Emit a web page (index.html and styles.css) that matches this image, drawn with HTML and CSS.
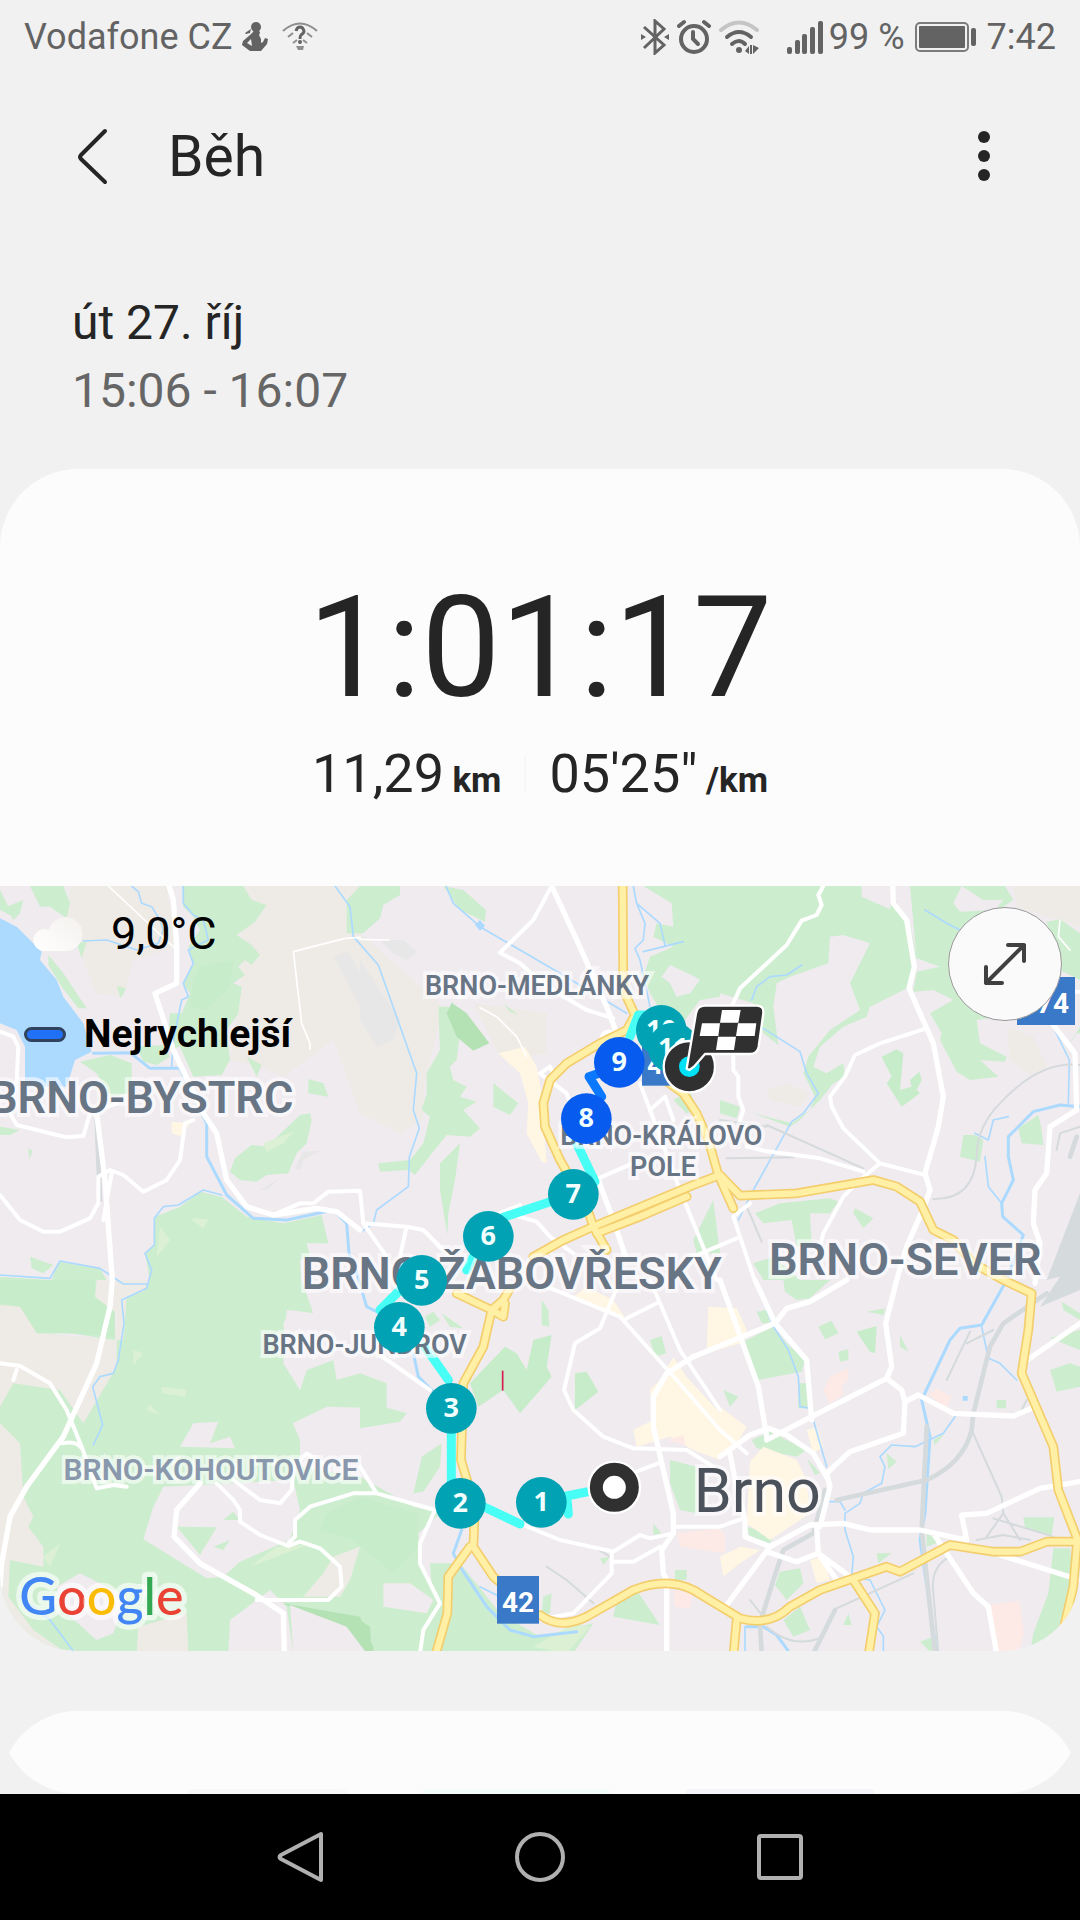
FILE: index.html
```html
<!DOCTYPE html>
<html lang="cs">
<head>
<meta charset="utf-8">
<meta name="viewport" content="width=device-width, initial-scale=1">
<title>Běh</title>
<link rel="stylesheet" href="styles.css">
</head>
<body>
<div class="status">
  <span>Vodafone CZ</span>
  <svg class="status-person" width="26" height="30" viewBox="0 0 26 30" fill="#636363"><circle cx="14" cy="5" r="5"/><path d="M12 8h5l1 3-1 2 2 4v4l2-1 2-4 3 1-1 5-6 7H8l-8-6 1-4 7-6 3-3z"/><path d="M3 11l6-4-1 4-4 1z"/><path d="M9 17l-4 4 5 3z" fill="#f1f1f1"/></svg>
  <svg class="status-ask" width="36" height="30" viewBox="0 0 36 30" fill="none" stroke="#8e8e8e" stroke-width="2"><path d="M1 9q17-15 34 0" stroke-width="2"/><path d="M6 15l5-4M30 15l-5-4M11 21l4-3M25 21l-4-3"/><path d="M14 9q1-4 4-4t4 4q0 2-3 4-1 1-1 4" stroke="#636363" stroke-width="3"/><circle cx="18" cy="20" r="1" stroke="#636363"/><path d="M14 24h8l-1 4h-5z" fill="#8e8e8e" stroke="none"/></svg>
  <span class="spacer"></span>
  <svg width="28" height="36" viewBox="0 0 28 36" fill="none" stroke="#636363" stroke-width="3"><path d="M3 8l20 18-9 8V2l9 8L3 29"/><path d="M0 15l5 3-5 3zM28 15l-5 3 5 3z" fill="#636363" stroke="none"/></svg>
  <svg class="status-alarm" width="34" height="36" viewBox="0 0 34 36" fill="none" stroke="#636363" stroke-linecap="round"><circle cx="17" cy="20" r="13" stroke-width="4"/><path d="M16 13v7l5 5" stroke-width="4"/><path d="M2 7l5-4M32 7l-5-4" stroke-width="4"/></svg>
  <svg class="status-wifi" width="40" height="36" viewBox="0 0 40 36" fill="none" stroke="#636363" stroke-width="4" stroke-linecap="round"><path d="M2 11q18-15 36 0" stroke="#c5c5c5"/><path d="M8 18q12-10 24 0M13 25q7-6 13 0"/><circle cx="20" cy="31" r="3" fill="#636363" stroke="none"/><path d="M26 32l4-5v8zM31 26h2v9h-2zM34 26v9l6-6z" fill="#636363" stroke="none"/></svg>
  <svg class="status-signal" width="36" height="36" viewBox="0 0 36 36" fill="#636363"><rect y="28" width="5" height="7" rx="2"/><rect x="8" y="21" width="5" height="14" rx="2"/><rect x="15" y="15" width="5" height="20" rx="2"/><rect x="23" y="8" width="5" height="27" rx="2"/><rect x="31" y="2" width="5" height="33" rx="2"/></svg>
  <span class="status-percent">99 %</span>
  <svg class="status-battery" width="62" height="30" viewBox="0 0 62 30"><rect x="1" y="1" width="52" height="28" rx="4" fill="none" stroke="#7b7b7b" stroke-width="2"/><rect x="4" y="4" width="46" height="22" rx="1" fill="#636363"/><rect x="56" y="6" width="5" height="18" rx="2" fill="#636363"/></svg>
  <span>7:42</span>
</div>
<header class="bar">
  <button class="icon-button" aria-label="Zpět"><svg width="34" height="60" viewBox="0 0 34 60" fill="none" stroke="#252525" stroke-width="4" stroke-linecap="round" stroke-linejoin="round"><path d="M29 5L5 29q-2 2 0 4l24 23"/></svg></button>
  <h1>Běh</h1>
  <button class="icon-button more" aria-label="Další možnosti"><svg width="12" height="50" viewBox="0 0 12 50" fill="#252525"><circle cx="6" cy="6" r="6"/><circle cx="6" cy="25" r="6"/><circle cx="6" cy="44" r="6"/></svg></button>
</header>
<main>
  <section class="when">
    <p class="day">út 27. říj</p>
    <p class="hours">15:06 - 16:07</p>
  </section>
  <section class="card">
    <div class="summary">
      <p class="duration">1:01:17</p>
      <div class="metrics">
        <p>11,29 <b>km</b></p>
        <span class="rule"></span>
        <p>05'25" <b>/km</b></p>
      </div>
    </div>
    <div class="map">
      <svg class="map-canvas" viewBox="0 18 3240 2295" preserveAspectRatio="xMidYMid slice" role="img" aria-label="Mapa trasy">
        <defs>
          <g id="highways">
            <path d="M1868 10L1870 330 1905 405 1880 450 1800 490 1700 550 1650 600 1630 670 1635 740 1680 840 1760 980 1780 1040 1820 1110"/>
            <path d="M1600 1130L1690 1080 1780 1040 2080 915 2160 885 2220 947 2390 940 2620 900 2690 920 2760 965 2800 1050 2860 1080 2920 1150 3010 1200 3095 1240 3085 1350 3065 1480 3160 1700 3175 1830 3235 1985"/>
            <path d="M1980 590L2050 640 2090 700 2125 780 2155 885 2200 985"/>
            <path d="M1790 1060L1920 1010 2060 950"/>
            <path d="M1370 1240L1475 1290 1450 1400 1390 1510 1383 1740 1425 1880 1420 2000 1480 2090 1540 2140"/>
            <path d="M1530 1225L1510 1260 1475 1290 1510 1310 1515 1270"/>
            <path d="M1410 2000L1345 2090 1342 2200 1305 2330"/>
            <path d="M1620 2205Q1680 2250 1760 2210L1900 2130Q2000 2090 2080 2130L2220 2215Q2310 2240 2370 2180L2460 2130 2560 2095 2660 2060 2700 2075 2850 1995 2980 2015 3060 2015 3140 1985 3240 1985"/>
            <path d="M2210 2220L2200 2330M2560 2100L2625 2200 2605 2330M3230 2000L3220 2120 3190 2250"/>
          </g>
        </defs>
        <rect class="land" width="3240" height="2320"/>

        <g class="field">
          <path d="M210 18H500L530 200 400 240 370 350 290 340 260 270 200 100ZM730 18H1080V160L1330 380 1270 620 1270 720 1200 760 1080 700 1000 480 850 590 790 560 690 540 720 320Z"/>
          <path d="M1420 370L1640 400V520L1580 530 1495 520ZM3040 18H3240V140L3050 80ZM3020 440L3100 470 3140 560 3090 585 3030 540ZM2300 630L2360 610 2430 640 2400 680 2310 660Z"/>
        </g>
        <g class="wood">
          <path d="M545 18H730L755 60 800 75 765 125 710 165 755 195 780 225 755 255 735 240 715 260 735 285 700 310 725 320 715 400 680 450 690 540 665 585 580 590 540 500 500 510 510 400 545 400 570 340 550 310 580 250 565 200 600 150 580 110 550 80Z"/>
          <path d="M0 30L40 110 0 90ZM90 18H190L210 70 200 115 150 80 120 80ZM20 80L70 60 60 100 40 120ZM145 225L190 280 260 385 235 385 185 320 145 255ZM350 318L378 325 362 355ZM240 545L330 525 395 550V640L330 650 290 580ZM410 500L490 495 510 530 470 555 430 545ZM740 530L785 555 770 590ZM925 597L970 610 985 650 925 640ZM0 740L60 750 30 765 0 765ZM85 805L97 812 88 840ZM230 190L260 185 245 235Z"/>
          <path d="M755 795L800 800 900 705 930 700 935 720 920 790 890 820 865 880 800 885 770 905 720 900 690 875 705 835Z"/>
          <path d="M465 1010L540 980 600 935 665 950 740 1010 850 1030 965 1005 985 1090 920 1090 930 1130 900 1140 905 1200 940 1300 870 1290 850 1330 860 1450 900 1530 920 1470 1000 1440 1010 1500 1080 1480 1160 1510V1585L980 1580 975 1630 880 1630 900 1680V1760L1080 1790 1240 1880 1320 1900 1255 1960 1260 2050 1320 2160V2320H0V1270L60 1280 110 1360 350 1380 380 1250 450 1200 435 1120 465 1095Z"/>
          <path d="M155 1200L175 1145 300 1165 320 1200 345 1300V1380L210 1360 110 1360 60 1280 0 1270V1190ZM90 1130L160 1155 130 1180 95 1165Z"/>
          <path d="M1080 18H1200V45L1150 75 1140 115 1090 160H1040V60ZM1330 18L1390 30 1458 90 1455 125 1380 90ZM1930 18L2015 70 2020 140 1970 130 1960 170 2020 200 1950 230 1930 290 1950 340 2000 420 2040 440 2100 360 2160 350V18Z"/>
          <path d="M1315 380H1345L1380 460 1370 540 1350 560 1360 600 1400 620 1380 650 1430 665 1390 690 1440 745 1410 770 1340 765 1280 840 1245 885 1225 870 1140 875 1135 850 1230 840 1270 790 1290 710 1265 690 1280 640V580L1320 510ZM1380 790L1365 900 1345 1000 1342 1065 1320 930V850ZM1480 610L1555 670 1530 705 1480 680ZM1510 370L1555 405 1530 395ZM2080 1080L2140 960 2160 1120 2090 1120ZM2020 660L2070 630 2090 690 2060 700Z"/>
          <path d="M2160 18H2680L2690 70 2730 130 2750 230 2730 320 2610 380 2600 410 2530 440 2460 500 2440 560 2480 580 2530 550 2535 590 2500 610 2460 660 2400 720 2370 740 2260 700 2375 730 2430 690 2445 650 2410 580 2425 530 2490 450 2580 390 2550 310 2570 270 2610 190 2530 165 2490 170 2485 250 2370 290 2330 310 2320 380 2335 495 2290 460 2260 370 2160 340Z"/>
          <path d="M2730 18H3015L3040 60 2950 120 2850 240 2920 380 3000 410 2930 420 2940 490 3020 530 3015 545 2940 540 2995 590 2910 600 2870 575 2820 480 2825 460 2790 400 2860 360 2800 330 2740 335 2750 275 2820 260 2750 235Z"/>
          <path d="M3140 125L3180 118 3240 160V300L3180 270ZM3055 745L3115 705 3125 750 3130 795 3065 790ZM2890 765H2925L2950 780 2940 845 2880 830ZM2265 1000L2340 970 2490 955 2515 965 2490 1000H2430L2435 1090 2390 1100 2375 1020 2290 1030ZM2565 985L2620 1015 2590 1045 2560 1000ZM2160 660L2220 680 2210 715 2160 700ZM2260 1150L2320 1130 2400 1200 2290 1200ZM3185 530L3230 460H3240V440Z"/>
          <path d="M1290 2050H1380L1500 2200 1620 2270 1780 2230 1720 2320H1310ZM1625 1260L1645 1290 1648 1340 1625 1335ZM1950 1380L1985 1368 1998 1420 1965 1430ZM1080 1560L1150 1580 1220 1600 1200 1625 1080 1645ZM1265 1730L1325 1690 1320 1760 1270 1835 1240 1840 1250 1800ZM2010 1740L2090 1760V1900L2040 1890 2010 1810ZM1850 2160L1910 2130 1980 2235 1840 2210ZM1275 1310L1300 1295 1320 1320 1290 1340ZM1325 1300L1390 1345 1350 1340ZM1630 2150L1655 2140 1650 2200 1625 2205ZM1800 2035L1830 2030 1810 2055ZM1960 1930L1985 1960 1960 1965ZM2025 2070H2060V2100H2025Z"/>
          <path d="M2230 1385L2320 1340 2360 1390 2415 1440 2405 1475 2275 1500ZM2270 1295L2300 1290 2310 1330 2285 1330ZM2350 1200H2490L2430 1255 2390 1260 2355 1235ZM2455 1340L2495 1322 2515 1360 2475 1378ZM2515 1415L2545 1408V1440L2520 1445ZM2600 1295L2655 1285 2650 1305ZM2700 1365L2725 1415 2700 1400ZM3150 1470L3210 1450 3240 1460V1520L3170 1535ZM3185 1265L3240 1300V1320L3190 1290ZM3150 1375L3240 1350V1410ZM3070 1912H3163L3155 1965 3075 1945ZM2325 2115L2340 2075 2400 2065 2410 2110 2360 2160ZM2350 2220L2400 2180 2430 2250 2380 2270ZM3160 2005H3210L3220 2100 3170 2260 3090 2320 3100 2260 3145 2140Z"/>
          <path d="M2255 1680L2310 1655 2420 1710 2390 1730 2270 1705ZM2170 1530L2215 1550 2190 1580ZM2800 1680L2835 1660 2805 1695ZM2660 1720L2690 1745 2665 1768ZM2630 2020H2675L2635 2050ZM2990 1560H3018V1585H2990ZM2395 1510H2423V1585H2395ZM2420 1735L2460 1780 2445 1785ZM2530 2235L2555 2235 2545 2200ZM2760 2285L2800 2270 2795 2320ZM2240 1940L2320 1965 2310 1990 2250 1970ZM2780 1960L2820 1985 2780 2000Z"/>
        </g>
        <g class="wood-dark">
          <path d="M1355 368L1400 400 1468 490 1420 512 1370 470 1340 400ZM850 2170L1080 2210 1120 2300V2320L1000 2250ZM1080 2220L1110 2240 1115 2320H1080Z"/>
        </g>
        <g class="wood-mid">
          <path d="M1515 1400L1550 1420 1580 1470 1600 1380 1655 1365 1640 1460 1655 1490 1560 1600 1510 1530 1435 1580 1410 1510ZM1725 1480L1760 1475 1795 1535 1725 1590ZM2570 1355L2630 1338 2625 1420 2610 1415ZM2645 530L2690 508 2710 520 2700 630 2735 620 2730 600 2758 575 2765 600 2750 630 2760 640 2705 680 2660 610 2675 590ZM0 1200H285V1250L345 1300V1370L210 1360 110 1360 60 1280 0 1270ZM980 1900L1080 1850 1250 1900 1255 2000 1180 2080 1060 1980 960 1950ZM600 260L700 240 690 320 620 390 570 380 580 300Z"/>
        </g>
        <g class="meadow">
          <path d="M790 790L880 755 850 790 800 815ZM480 1040L510 1080 470 1130ZM570 1015L625 1018 610 1045ZM400 1410L430 1420 400 1455ZM485 1520L560 1530 555 1550 485 1540ZM450 1575L480 1605 440 1590ZM130 2030L180 1990 150 2060ZM830 2000L920 1995 750 2060ZM1600 2300L1720 2230 1770 2240 1700 2320Z"/>
        </g>
        <g class="field">
          <path d="M0 1275L60 1280 110 1360 350 1380 350 1460 250 1630 180 1530 40 1510 0 1580ZM290 1200H450L430 1235 380 1250 370 1380H345L350 1300 285 1250ZM0 1630L60 1690 70 1850 100 1910 85 1940 130 2000V2060L30 2040 25 2150 100 2250 200 2320H0ZM415 2240L560 2200 565 2320H410ZM1080 2000L1000 2030 970 2080 910 2150H1020L1050 2100Z"/>
        </g>
        <g class="land">
          <path d="M540 1700L580 1630 655 1625 630 1690 690 1670 705 1705ZM860 1290L940 1305 920 1200H1200V1440L1000 1440 920 1470 900 1530 850 1450ZM980 1580L1080 1620V1700L900 1675 878 1630ZM490 1820L880 1800 900 1890 870 1980 720 2045 670 2090 620 2095 430 1978 460 1880ZM690 2220L810 2130 860 2180 880 2320H685ZM170 2120L240 2080 380 2150 340 2260 290 2280 200 2200ZM870 2175L1040 2240 1100 2320H880ZM1150 2110H1230L1300 2160 1280 2200 1150 2180ZM1985 290L2010 255 2085 290 2100 300 2070 340 2030 350 2010 310ZM2585 18H2680L2670 88 2585 50ZM2860 70L2885 18 2950 60 3010 60 2985 90 2880 95Z"/>
        </g>
        <path class="wood" d="M530 1940L650 1942 600 2025ZM640 2000L690 1980 670 2010ZM670 1920L700 1895 720 1920Z"/>
        <g class="town">
          <path d="M1495 520L1575 500 1610 560 1625 640 1640 850 1625 845 1580 760 1585 670 1560 580ZM1720 1250L1880 1320 1840 1260 1760 1220ZM1950 1530L1980 1500 2020 1430 2060 1490 2160 1600V1740L2080 1710 2010 1670 1910 1700 1900 1650 1960 1620ZM2125 1280L2210 1285 2240 1350 2220 1390 2120 1420ZM2160 1580L2240 1640 2210 1690 2160 1720ZM2250 1745L2290 1700 2390 1740 2420 1800 2430 1900 2310 1980 2240 1930ZM2160 2030L2220 2000 2280 2010 2220 2050 2170 2090ZM2430 2040L2470 2030 2490 2100 2450 2110ZM2420 1650L2450 1640 2470 1700 2440 1720ZM515 725L570 730 540 768 515 760Z"/>
        </g>
        <path class="hospital" d="M2030 1960L2160 1945 2175 1965V2020L2040 2000ZM2020 2130L2080 2140 2070 2185 2025 2180ZM2000 1680L2050 1665 2055 1695ZM2470 1530L2490 1490 2545 1465V1500L2525 1520 2530 1545 2490 1570ZM2785 1545L2810 1525 2855 1550 2840 1585ZM2970 2175L3058 2162 3072 2260 3055 2320H2990Z"/>
        <path class="yard" d="M3240 940V1230L3120 1280 3180 1190 3140 1200Z"/>
        <path class="industry" d="M1000 228L1045 215 1080 280V380ZM1080 240L1200 420 1180 480 1130 500 1080 420ZM1140 180L1210 180 1250 215 1220 240 1180 220ZM885 865L910 815 960 812 910 840 900 870ZM780 930L840 895 800 930Z"/>

        <path class="water" d="M0 115L50 140 125 215 120 240 170 300 190 350 250 430 275 515 225 540 200 620H75V500L50 450 0 430ZM1425 135L1440 120 1455 138 1440 152ZM2888 1548H2903V1562H2888Z"/>
        <g class="stream">
          <path d="M395 18L415 35 425 70 455 80 480 120 490 150 475 190 410 210 320 180 250 183M550 18V70L580 105 610 120 625 180 565 210 580 250 550 310 565 350 545 360 520 480 515 560"/>
          <path d="M665 945L610 930 535 975 490 980 463 1015V1095L435 1120 455 1170 440 1225 365 1260 372 1330 355 1440 340 1480 300 1490 278 1520 308 1635 280 1695M1005 18L1050 80 1060 170 1135 255 1250 580 1240 690 1258 745 1228 830 1225 920 1130 990 1120 1030 1085 1055M0 1185L150 1195 180 1143 300 1165 370 1212 445 1212"/>
          <path d="M1338 18L1360 70 1440 140 1680 280 1880 400M1900 18L1910 70 1935 130 1930 180 1905 205 1920 240 1950 380M1910 70L1980 130 1995 195M1930 215L2050 185M2405 255L2360 285 2310 290 2270 320 2255 360M2290 445L2400 515 2420 580 2455 640 2410 700 2375 725 2260 930 2215 1020M2775 90L2840 130 2880 150"/>
          <path d="M3155 430L3208 540 3205 670M3025 710L2980 720 2965 780 2925 760M2955 830L2965 920 3005 970M60 2150L150 2220 180 2260 225 2320M2265 1200L2320 1340 2365 1410 2395 1490 2400 1580 2430 1585 2480 1760M2945 1340L2965 1435 3000 1450 3050 1500M1440 2120L1500 2150 1580 2210"/>
          <path d="M2865 1610L2830 1660 2745 1700 2675 1695 2640 1730 2655 1760 2645 1810 2590 1840 2580 1870 2535 1900V1950L2560 2030 2555 2090 2610 2100 2655 2190 2630 2240 2650 2268V2320M2490 1865L2520 1865 2535 1890M2235 2240V2320"/>
        </g>
        <g class="river">
          <path d="M280 520L390 518 450 565 540 565 620 730V830L680 945 760 1015 860 1020 1000 990 1040 1030 1047 1120 1070 1180 1100 1280 1140 1300M1240 1420L1255 1490 1295 1530M1385 1950L1360 2020 1380 2060 1460 2180 1530 2250 1600 2270 1730 2255M3240 680L3180 675 3100 695 3025 770V830L3040 900 3005 970 3008 1010 3070 1065 3020 1200 2945 1335 2880 1345 2850 1380 2765 1560 2790 1670 2775 1900 2760 1980 2810 2320M2240 2240H2290L2330 2265 2370 2320"/>
        </g>
        <g class="rail">
          <path d="M2300 735L2590 865M2180 835L2380 832M2160 720L2300 740M2800 957Q2920 960 2930 830 2930 740 3000 670 3120 540 3240 555M3170 810L3180 760 3240 740M2915 1650L3005 1850 3010 1900 2960 1970M3010 1900L3060 1980M2980 1915L3160 1970M2930 1980L3010 1965 3090 1980M2840 1500L2910 1355M2900 1390L2980 1350M2510 2185L2740 2080M2850 2030Q2790 2060 2800 2140L2815 2320M2250 2160L2290 2210M1640 2060L1700 2100 1780 2170M2240 980L2285 1085M1780 2000L1830 2030M2300 2240Q2380 2310 2470 2270M3080 1560L3060 1600"/>
        </g>
        <g class="rail-wide">
          <path d="M3140 1240L3010 1330 2970 1400 2920 1600 2915 1650Q2890 1750 2780 1800L2510 1860M2780 1640L2765 1950 2805 2320M2475 1830L2440 1960 2350 2010 2320 2100 2280 2230 2285 2320M2505 2190L2440 2320M3210 830L3230 770M290 720L300 960"/>
        </g>
        <g class="street">
          <path d="M0 455L40 470 55 500 50 600 30 700 50 735 200 772 250 768 270 700 350 670M0 945L60 1020 130 1055H180L270 1015 295 970V890L330 870 370 885 430 935 500 900 540 840 555 730 580 720M310 1020L335 880M830 1000L900 970 940 970 985 935 1080 932 1090 1030 1220 1040 1270 1050 1350 1130M1220 1040L1200 1130M1090 1030L1160 1130"/>
          <path d="M1655 18L1600 120 1500 218 1560 250 1640 320 1760 390 1840 415M1620 580L1700 640 1730 720M1920 610L1950 690 2040 930 2150 1200M1950 690L1995 650 2020 720M1795 895L1910 845M1520 1000L1610 1025 1650 1070 1720 1120M1620 580L1650 560 1660 580M1800 490Q1810 440 1840 460M1460 1015L1560 975"/>
          <path d="M2470 18L2455 45 2465 75 2450 105 2405 122 2360 195 2220 325 2195 380M2200 530V570L2215 590V650L2230 690 2220 720M2770 448L2640 490 2565 525 2535 590 2490 650 2495 680 2530 745 2640 850 2775 885M2640 850L2580 900 2530 950 2470 1060 2460 1100M2240 800L2290 812 2460 835 2590 875M3240 335H3210M2260 1190L2200 1010 2250 970M2080 1130L2210 1075"/>
          <path d="M0 1450L60 1458 150 1510 200 1590 245 1700 290 1825 340 1815 380 1820M185 1690Q230 1680 245 1705M50 1470L40 1500M770 2160H985L1025 2120 1020 2060 960 2005 900 1985 865 1998 780 1965 720 1925V1890L700 1860 650 1810M700 1800L780 1860 840 1870 875 1830 880 1760 920 1720 980 1760M865 1990L885 1970V1920L930 1880 1060 1840 1130 1840M1080 1760L1130 1840 1305 1890 1260 1990V2050L1320 2170 1270 2250 1260 2320M1140 1425L1290 1530"/>
          <path d="M1640 1220L1860 1310 2030 1500 2160 1650 2240 1720M1860 1200L1800 1345 1725 1390 1692 1530 1720 1590 1810 1670 1900 1705 2060 1710 2140 1760M1950 1200L2040 1410 2160 1590M2020 1960L1950 1975 1920 1965 1840 2015 1680 1980 1570 1935M1980 2000L1900 2045H1840M1835 2020V2080L1720 2200 1640 2215M1910 1775L1980 1748M2030 1940H2160L2230 1915M1880 1315L1970 1270"/>
        </g>
        <g class="road">
          <path d="M505 10L520 60 530 200V310L465 340 520 510 610 700 650 760 680 900 740 980 820 1005 950 985 1010 995 1080 1050M290 700L315 900 337 1200 330 1280 290 1450 190 1670 80 1820 30 1910 5 2050 0 2120M1655 18L1730 180 1820 380 1850 460M1795 900L1840 1020 1880 1140M600 1810L530 1890 522 1970 600 2050 760 2140 850 2200 853 2320"/>
          <path d="M2678 10L2680 70 2720 120 2743 260 2727 325 2800 490 2830 650 2815 740 2775 880 2790 930 2770 985 2720 1100 2690 1200 2657 1330 2675 1460 2660 1495 2435 1610 2300 1680M3160 435L3225 520 3230 690 3150 740 3140 880 3105 930 3100 1030 3120 1090 3105 1210"/>
          <path d="M2160 1200L2275 1520 2300 1670M2080 1430L2325 1330 2360 1285 2430 1265 2540 1200M2265 1200L2325 1330 2420 1440 2435 1620M2660 1495L2705 1530 2715 1565 2710 1660 2550 1715 2480 1780 2490 1820 2460 1940M2715 1565L2755 1545 2860 1600 3040 1608 3095 1585M2160 1730L2250 1665 2305 1645 2360 1665 2440 1720 2485 1800M2190 1720L2205 1800 2235 1920V1970L2310 2000 2430 1935 2530 1930 2610 1950H2760L2900 1980 2885 1905 2960 1900 3120 1825 3240 1805M2310 2000L2180 2175M2300 2015L2390 2045 2455 2020 2510 2100M2450 1940L2455 2020 2550 2090M2800 1960L2920 2140 2965 2180 2990 2320M3000 2025L3240 2100M3075 1445L3140 1400 3240 1330"/>
          <path d="M2080 1430L2000 1480 1960 1550V1640L2020 1900V1960L1985 2010 1990 2080 2000 2100V2320"/>
        </g>
        <path class="lane" d="M325 18L530 210M1168 180L1080 178V172L1035 175 880 215 905 430 930 490V508M1440 383L1490 410 1550 470 1580 530M3180 120L3175 170 3210 210"/>
        <use href="#highways" class="highway-edge"/>
        <use href="#highways" class="highway"/>

        <g class="route">
          <path d="M1765 1835L1700 1848 1705 1902M1440 1875L1560 1932M1354 1650V1810M1345 1500L1275 1400M1140 1290L1200 1230M1400 1170L1420 1130M1510 1012L1660 962M1785 905L1725 780M1890 470L1915 405 1950 405"/>
          <path class="fastest" d="M1805 650L1767 590 1810 575"/>
        </g>
        <path d="M1508 1472V1532" stroke="#d81b52" stroke-width="5"/>

        <g class="label">
          <text class="large" x="880" y="700" text-anchor="end">BRNO-BYSTRC</text>
          <text class="large" x="1535" y="1228" text-anchor="middle">BRNO-ŽABOVŘESKY</text>
          <text class="large" x="2716" y="1184" text-anchor="middle">BRNO-SEVER</text>
          <text x="1611" y="344" text-anchor="middle">BRNO-MEDLÁNKY</text>
          <text x="1984" y="794" text-anchor="middle">BRNO-KRÁLOVO</text>
          <text x="1989" y="889" text-anchor="middle">POLE</text>
          <text x="1094" y="1421" text-anchor="middle">BRNO-JUNDROV</text>
          <text class="pale" x="633" y="1799" text-anchor="middle">BRNO-KOHOUTOVICE</text>
          <text class="city" x="2272" y="1896" text-anchor="middle">Brno</text>
        </g>
        <g class="shield">
          <rect x="3051" y="291" width="174" height="144"/><text x="3207" y="398" text-anchor="end">374</text>
          <rect x="1926" y="474" width="126" height="143"/><text x="1989" y="582" text-anchor="middle">42</text>
          <rect x="1491" y="2088" width="126" height="143"/><text x="1554" y="2195" text-anchor="middle">42</text>
        </g>

        <g class="stop">
          <circle cx="1984" cy="451" r="76"/><text x="1984" y="478">10</text>
          <circle cx="2020" cy="504" r="76"/><text x="2020" y="531">11</text>
          <circle cx="1265" cy="1201" r="76"/><text x="1265" y="1228">5</text>
          <circle cx="1198" cy="1342" r="76"/><text x="1198" y="1368">4</text>
          <circle cx="1354" cy="1585" r="76"/><text x="1354" y="1611">3</text>
          <circle cx="1381" cy="1870" r="76"/><text x="1381" y="1896">2</text>
          <circle cx="1624" cy="1867" r="76"/><text x="1624" y="1893">1</text>
          <circle cx="1465" cy="1069" r="76"/><text x="1465" y="1095">6</text>
          <circle cx="1720" cy="943" r="76"/><text x="1720" y="969">7</text>
          <circle class="fastest" cx="1759" cy="716" r="76"/><text x="1759" y="742">8</text>
          <circle class="fastest" cx="1858" cy="547" r="76"/><text x="1858" y="573">9</text>
        </g>
        <g fill="#303030" stroke="#fff" stroke-width="7" stroke-linejoin="round">
          <circle cx="1843" cy="1822" r="77"/><circle cx="1843" cy="1822" r="31" fill="#fff"/>
          <circle cx="2068" cy="560" r="77"/><circle cx="2068" cy="560" r="31" fill="#00e1f5" stroke="none"/>
          <path d="M2068 570L2060 566 2088 400Q2091 377 2115 377H2270Q2292 377 2290 400L2276 500Q2272 522 2250 522H2115L2082 560Z"/>
          <path stroke="none" fill="#fff" d="M2166 390H2222L2215 428H2160ZM2106 430H2160L2155 468H2099ZM2214 430H2269L2264 468H2208ZM2154 470H2208L2202 510H2148Z"/>
        </g>
        <text class="brand" x="58" y="2205"><tspan fill="#4285f4">G</tspan><tspan fill="#ea4335">o</tspan><tspan fill="#fbbc05">o</tspan><tspan fill="#4285f4">g</tspan><tspan fill="#34a853">l</tspan><tspan fill="#ea4335">e</tspan></text>
      </svg>
      <div class="legend">
        <svg width="52" height="36" viewBox="0 0 52 36"><defs><linearGradient id="cloud" x1="0" y1="1" x2="1" y2="0"><stop offset="0" stop-color="#fff"/><stop offset="1" stop-color="#f4f1ee"/></linearGradient></defs><path d="M12 35a11 11 0 1 1 5-21 17 17 0 1 1 18 21z" fill="url(#cloud)"/></svg>
        <span class="temperature">9,0°C</span>
        <span class="pill"></span>
        <strong>Nejrychlejší</strong>
      </div>
      <button class="expand" aria-label="Zvětšit mapu"><svg width="44" height="44" viewBox="0 0 44 44" fill="none" stroke="#404040" stroke-width="4" stroke-linecap="round" stroke-linejoin="round"><path d="M3 41L41 3M25 3h16v16M3 25v16h16"/></svg></button>
    </div>
  </section>
  <section class="next"><div class="next-card"><i class="chip steel"></i><i class="chip mint"></i><i class="chip violet"></i></div></section>
</main>
<nav class="system">
  <button aria-label="Zpět"><svg width="50" height="52" viewBox="0 0 50 52"><path d="M46 3v46L6 28q-3-2 0-4z"/></svg></button>
  <button aria-label="Domů"><svg width="50" height="52" viewBox="0 0 50 52"><circle cx="25" cy="26" r="23"/></svg></button>
  <button aria-label="Poslední aplikace"><svg width="50" height="52" viewBox="0 0 50 52"><rect x="4" y="5" width="42" height="42" rx="2"/></svg></button>
</nav>
</body>
</html>
```
FILE: styles.css
```css
* { box-sizing: border-box; }

body {
  margin: 0;
  min-height: 100vh;
  display: flex;
  flex-direction: column;
  background: #f1f1f1;
  color: #252525;
  font-family: Roboto, "Noto Sans", sans-serif;
}

h1, p { margin: 0; font-weight: 400; }

button {
  display: flex;
  align-items: center;
  justify-content: center;
  padding: 0;
  border: 0;
  background: none;
}

svg { display: block; flex: none; }

.status {
  display: flex;
  align-items: center;
  height: 74px;
  padding: 0 24px;
  color: #636363;
  font-size: 36px;
  white-space: nowrap;
}
.spacer { flex: 1; }
.status-person { margin-left: 10px; }
.status-ask { margin-left: 14px; }
.status-alarm { margin-left: 8px; }
.status-wifi { margin-left: 8px; }
.status-signal { margin-left: 28px; }
.status-percent { margin-left: 6px; }
.status-battery { margin: 0 10px; }

.bar {
  display: flex;
  align-items: center;
  height: 164px;
  padding: 0 60px;
}
.bar h1 { flex: 1; margin-left: 42px; font-size: 57px; }
.icon-button { width: 66px; height: 80px; }
.more { margin-right: 3px; }

main { flex: 1; display: flex; flex-direction: column; }

.when {
  padding: 51px 72px 44px;
  font-size: 48px;
  line-height: 68px;
}
.hours { color: #666; }

.card {
  border-radius: 78px;
  background: #fcfcfc;
  overflow: hidden;
}
.summary {
  display: flex;
  flex-direction: column;
  align-items: center;
  gap: 12px;
  padding: 97px 0 80px;
}
.duration { font-size: 141px; line-height: 164px; }
.metrics {
  display: flex;
  align-items: center;
  font-size: 54px;
  line-height: 64px;
}
.metrics b { margin-left: -5px; font-size: 35px; line-height: 1; }
.rule { width: 2px; height: 38px; margin: 0 23px; background: #f7f7f7; }

.map { position: relative; aspect-ratio: 1080 / 765; }
.map-canvas { width: 100%; height: 100%; }
.legend {
  position: absolute;
  top: 16px;
  left: 24px;
  display: grid;
  grid-template-columns: 42px auto;
  column-gap: 18px;
  row-gap: 36px;
  align-items: center;
  color: #000;
  line-height: 64px;
}
.legend svg { margin-left: 8px; }
.temperature { padding-left: 27px; font-size: 45px; }
.legend strong { font-size: 39px; }
.pill {
  height: 15px;
  border: 3px solid #30425e;
  border-radius: 8px;
  background: #2171f8;
}
.expand {
  position: absolute;
  top: 21px;
  right: 18px;
  width: 114px;
  height: 114px;
  border: 1px solid #999;
  border-radius: 50%;
  background: #fafafa;
}

.land { fill: #efebef; }
.field { fill: #eeebe6; }
.wood { fill: #cdedcf; }
.wood-mid { fill: #c7ecc9; }
.wood-dark { fill: #b4e2b5; }
.meadow { fill: #dcf1d4; }
.town { fill: #fff6e3; }
.hospital { fill: #fde9e6; }
.industry { fill: #e8e7e8; }
.yard { fill: #d5dadc; }
.water { fill: #acdaff; }
.stream, .river, .rail, .rail-wide, .street, .road, .lane, .route, .highway, .highway-edge {
  fill: none;
  stroke-linejoin: round;
  stroke-linecap: round;
}
.stream { stroke: #acdaff; stroke-width: 5; }
.river { stroke: #acdaff; stroke-width: 9; }
.rail { stroke: #d5dadc; stroke-width: 6; }
.rail-wide { stroke: #d5dadc; stroke-width: 14; }
.street { stroke: #fff; stroke-width: 12; }
.road { stroke: #fff; stroke-width: 16; }
.lane { stroke: #fff; stroke-width: 5; }
.highway-edge { stroke: #f4ce6c; stroke-width: 29; }
.highway { stroke: #fff0a6; stroke-width: 19; }
.route { stroke: #48fff6; stroke-width: 27; }
.route .fastest { stroke: #0a78ff; }
.label {
  fill: #687585;
  font-size: 81px;
  font-weight: 600;
  stroke: rgba(255, 255, 255, .6);
  stroke-width: 22;
  paint-order: stroke;
}
.large { font-size: 135px; }
.pale { font-size: 90px; fill: #8998ad; }
.city { font-size: 183px; font-weight: 400; fill: #4b525b; }
.shield { fill: #3a78c8; font-size: 84px; font-weight: 700; }
.shield text { fill: #fff; }
.stop { fill: #00a2b3; font: 700 81px "Open Sans", "Noto Sans", sans-serif; text-anchor: middle; }
.stop .fastest { fill: #075bee; }
.stop text { fill: #f2ffff; }
.brand {
  font: 500 156px Lato, Roboto, sans-serif;
  stroke: rgba(255, 255, 255, .6);
  stroke-width: 32;
  stroke-linejoin: round;
  paint-order: stroke;
}

.next {
  flex: 1;
  min-height: 83px;
  margin-top: 60px;
  display: flex;
  border-radius: 0 0 78px 78px;
  overflow: hidden;
}
.next-card {
  flex: 1;
  display: flex;
  align-items: flex-end;
  justify-content: center;
  gap: 74px;
  padding-right: 18px;
  border-radius: 78px 78px 0 0;
  background: #fcfcfc;
}
.chip { width: 190px; height: 5px; border-radius: 20px 20px 0 0; }
.steel { width: 160px; background: #f7f8fa; }
.mint { background: #f3fcf9; }
.violet { background: #f5f4fb; }

.system {
  display: flex;
  align-items: center;
  justify-content: center;
  gap: 190px;
  height: 126px;
  background: #000;
}
.system svg { fill: none; stroke: #b0b0b0; stroke-width: 4; stroke-linejoin: round; }
```
